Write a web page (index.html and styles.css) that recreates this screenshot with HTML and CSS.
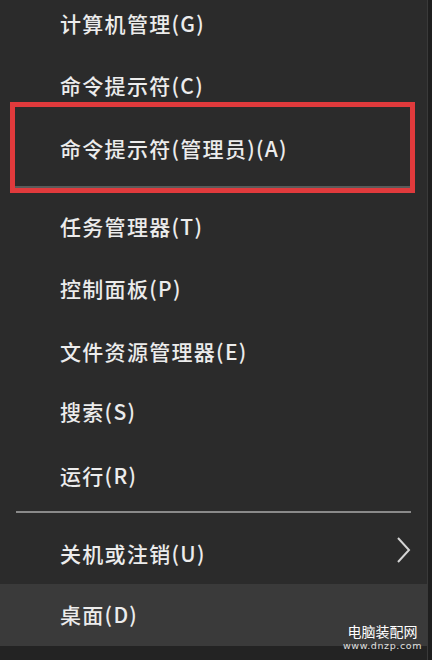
FILE: index.html
```html
<!DOCTYPE html>
<html lang="zh-CN">
<head>
  <meta charset="UTF-8">
  <title>快速访问菜单</title>
  <link rel="stylesheet" href="styles.css">
</head>
<body>

<div class="menu">
  <div class="item first">计算机管理(G)</div>
  <div class="item gap-32">命令提示符(C)</div>
  <div class="marked">
    <div class="item selected">命令提示符(管理员)(A)</div>
  </div>
  <div class="item gap-20">任务管理器(T)</div>
  <div class="item gap-32">控制面板(P)</div>
  <div class="item gap-33">文件资源管理器(E)</div>
  <div class="item gap-30">搜索(S)</div>
  <div class="item gap-34">运行(R)</div>
  <div class="separator"></div>
  <div class="item submenu">
    <span>关机或注销(U)</span>
    <svg class="chevron" width="16" height="28" viewBox="0 0 16 28">
      <path d="M3 1 L14 13 L3 25" fill="none" stroke="#d4d4d4" stroke-width="2"/>
    </svg>
  </div>
  <div class="item hover">桌面(D)</div>
  <div class="menu-bottom"></div>
</div>

<div class="watermark">
  <div class="wm-title">电脑装配网</div>
  <div class="wm-url">www.dnzp.com</div>
</div>

</body>
</html>
```

FILE: styles.css
```css
* {
  box-sizing: border-box;
}

body {
  margin: 0;
  width: 432px;
  height: 660px;
  overflow: hidden;
  background-color: #1f1f1f;
  font-family: "Noto Sans CJK SC", "Noto Sans", sans-serif;
  position: relative;
}

.menu {
  width: 428px;
  height: 660px;
  background-color: #2b2b2b;
  border-right: 1px solid #3a3a3a;
  display: flex;
  flex-direction: column;
}

.item {
  height: 30px;
  line-height: 27px;
  padding-left: 60px;
  font-size: 21px;
  font-weight: 500;
  letter-spacing: 1.3px;
  color: #ececec;
  white-space: nowrap;
}

.first {
  margin-top: 10px;
}

.gap-20 { margin-top: 20px; }
.gap-30 { margin-top: 30px; }
.gap-32 { margin-top: 32px; }
.gap-33 { margin-top: 33px; }
.gap-34 { margin-top: 34px; }

.marked {
  margin: 0 12px 0 10px;
  border: 5px solid #e03a3c;
}

.selected {
  height: 81px;
  padding-top: 28px;
  padding-left: 45px;
  border-bottom: 2px solid #5a5a5a;
}

.separator {
  height: 2px;
  margin: 19px 16px 0 16px;
  background-color: #8a8a8a;
}

.submenu {
  margin-top: 27px;
  padding-right: 16px;
  display: flex;
  justify-content: space-between;
}

.chevron {
  margin-top: -3px;
}

.hover {
  margin-top: 14px;
  height: 62px;
  padding-top: 17px;
  background-color: #3a3a3a;
}

.menu-bottom {
  flex: 1;
  background-color: #232323;
}

.watermark {
  position: absolute;
  right: 10px;
  bottom: 8px;
  text-align: center;
  color: #ffffff;
}

.wm-title {
  font-size: 14px;
  line-height: 17px;
}

.wm-url {
  font-family: "DejaVu Sans", sans-serif;
  font-size: 9.5px;
  line-height: 12px;
  letter-spacing: 0.6px;
  color: #e0e0e0;
}
```
